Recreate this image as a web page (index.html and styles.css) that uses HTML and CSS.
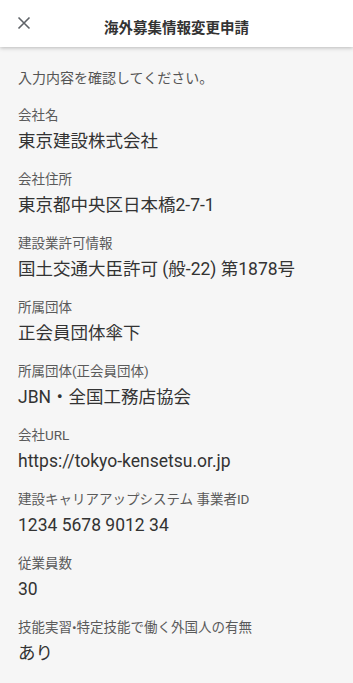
FILE: index.html
```html
<!DOCTYPE html>
<html lang="ja">
<head>
    <meta charset="UTF-8">
    <meta name="viewport" content="width=device-width, initial-scale=1.0">
    <title>海外募集情報変更申請</title>
    <link rel="stylesheet" href="styles.css">
</head>
<body>

    <!-- Header -->
    <div class="header">
        <div class="close">
            <svg width="14" height="14" viewBox="0 0 14 14">
                <path d="M1.5 1.5 L12.5 12.5 M12.5 1.5 L1.5 12.5" stroke="#5f6368" stroke-width="1.6" fill="none"/>
            </svg>
        </div>
        <div class="title">海外募集情報変更申請</div>
    </div>

    <!-- Confirm list -->
    <div class="content">
        <p class="note">入力内容を確認してください。</p>

        <div class="item">
            <div class="label">会社名</div>
            <div class="value">東京建設株式会社</div>
        </div>
        <div class="item">
            <div class="label">会社住所</div>
            <div class="value">東京都中央区日本橋2-7-1</div>
        </div>
        <div class="item">
            <div class="label">建設業許可情報</div>
            <div class="value">国土交通大臣許可 (般-22) 第1878号</div>
        </div>
        <div class="item">
            <div class="label">所属団体</div>
            <div class="value">正会員団体傘下</div>
        </div>
        <div class="item">
            <div class="label">所属団体(正会員団体)</div>
            <div class="value">JBN・全国工務店協会</div>
        </div>
        <div class="item">
            <div class="label">会社URL</div>
            <div class="value">https://tokyo-kensetsu.or.jp</div>
        </div>
        <div class="item">
            <div class="label">建設キャリアアップシステム 事業者ID</div>
            <div class="value">1234 5678 9012 34</div>
        </div>
        <div class="item">
            <div class="label">従業員数</div>
            <div class="value">30</div>
        </div>
        <div class="item">
            <div class="label">技能実習•特定技能で働く外国人の有無</div>
            <div class="value">あり</div>
        </div>
        <div class="item">
            <div class="label">会社概要</div>
            <div class="value">-</div>
        </div>
    </div>

</body>
</html>
```

FILE: styles.css
```css
/* Basic page */
body {
    font-family: Roboto, "Noto Sans CJK JP", sans-serif;
    margin: 0;
    padding: 0;
    background-color: #f6f6f6;
    color: #333;
    overflow: hidden;
}

.header {
    position: relative;
    height: 47px;
    background-color: #fff;
    box-shadow: 0 1px 4px rgba(0, 0, 0, 0.25);
    display: flex;
    align-items: center;
    justify-content: center;
}

.close {
    position: absolute;
    left: 17px;
    top: 16px;
    width: 14px;
    height: 14px;
    display: flex;
}

.title {
    font-size: 14.5px;
    font-weight: bold;
    color: #333;
    margin-top: 5px;
}

/* Content */
.content {
    padding: 21px 18px 0 18px;
}

.note {
    margin: 0 0 17px 0;
    font-size: 14px;
    line-height: 20px;
    color: #555;
}

.item {
    margin-bottom: 15px;
}

.label {
    font-size: 13.5px;
    line-height: 20px;
    color: #5a5a5a;
}

.value {
    margin-top: 3px;
    font-size: 17.5px;
    line-height: 26px;
    color: #333;
}
```
